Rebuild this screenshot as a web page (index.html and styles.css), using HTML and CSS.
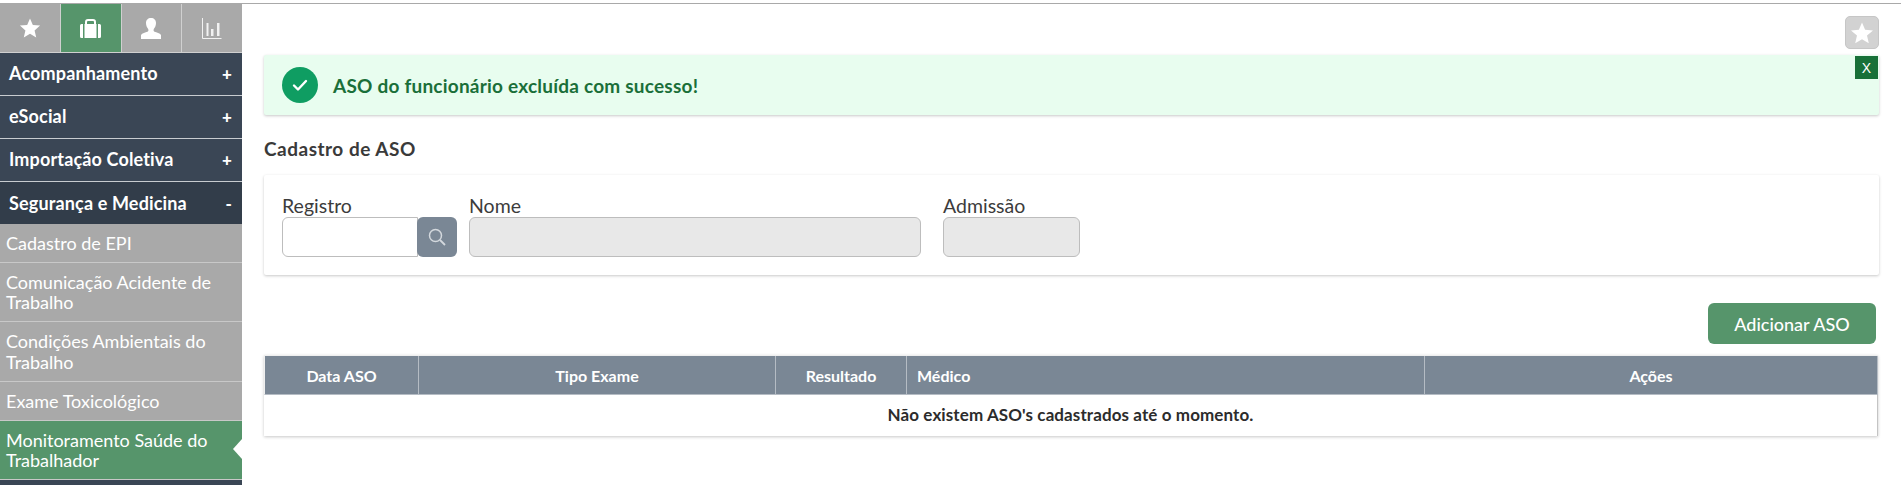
FILE: index.html
```html
<!DOCTYPE html>
<html lang="pt-BR">
<head>
<meta charset="utf-8">
<title>Cadastro de ASO</title>
<link rel="stylesheet" href="styles.css">
</head>
<body>
<div class="page">
  <aside class="sidebar">
    <nav class="tabs">
      <div class="tab">
        <svg width="22" height="22" viewBox="0 0 24 24"><path fill="#fff" d="M12 1.500l3.100 7.200 7.900.7-6 5.200 1.800 7.700L12 18.200l-6.800 4.100 1.800-7.700-6-5.200 7.900-.7z"/></svg>
      </div>
      <div class="tab tab-active">
        <svg width="21" height="19" viewBox="0 0 21 19"><path fill="#fff" d="M0 6.500Q0 5 1.500 5H3v14H1.500Q0 19 0 17.500zM4.500 5h12v14h-12zM18 5h1.500Q21 5 21 6.500v11q0 1.500-1.500 1.500H18z"/><path fill="none" stroke="#fff" stroke-width="2" d="M6 5V3q0-2 2-2h5q2 0 2 2v2"/></svg>
      </div>
      <div class="tab">
        <svg width="20" height="21" viewBox="0 0 20 21"><path fill="#fff" d="M10 0c3 0 5 2 5 5 0 2.500-1 4.700-2.200 6-.5 1.300-.2 2.300.7 2.800 2 .9 5.500 1.200 6.500 3.200V21H0v-4c1-2 4.500-2.300 6.500-3.200.9-.5 1.200-1.500.7-2.800C6 9.700 5 7.500 5 5c0-3 2-5 5-5z"/></svg>
      </div>
      <div class="tab">
        <svg width="20" height="21" viewBox="0 0 20 21"><path fill="none" stroke="#f2f2f2" stroke-width="1" d="M.5 0v20.500H19.500"/><path fill="#f2f2f2" d="M4.500 5h2v13h-2zM9 11h2.500v7H9zM15 5h2.500v13H15z"/></svg>
      </div>
    </nav>
    <ul class="menu">
      <li class="group"><span>Acompanhamento</span><b>+</b></li>
      <li class="group"><span>eSocial</span><b>+</b></li>
      <li class="group"><span>Importação Coletiva</span><b>+</b></li>
      <li class="group group-open"><span>Segurança e Medicina</span><b>-</b></li>
      <li class="item">Cadastro de EPI</li>
      <li class="item">Comunicação Acidente de Trabalho</li>
      <li class="item">Condições Ambientais do Trabalho</li>
      <li class="item">Exame Toxicológico</li>
      <li class="item item-active">Monitoramento Saúde do Trabalhador</li>
      <li class="group group-rest"></li>
    </ul>
  </aside>
  <main class="content">
    <div class="fav-row">
      <button class="fav" type="button" aria-label="Favoritar">
        <svg width="24" height="24" viewBox="0 0 24 24"><path fill="#fff" d="M12 1.500l3.100 7.200 7.900.7-6 5.200 1.800 7.700L12 18.200l-6.800 4.100 1.800-7.700-6-5.200 7.900-.7z"/></svg>
      </button>
    </div>
    <section class="alert">
      <span class="check">
        <svg width="20" height="20" viewBox="0 0 20 20"><path fill="none" stroke="#fff" stroke-width="2.400" stroke-linecap="round" stroke-linejoin="round" d="M4 10.500l4 4 8-8.500"/></svg>
      </span>
      <strong class="alert-text">ASO do funcionário excluída com sucesso!</strong>
      <button class="alert-close" type="button">X</button>
    </section>
    <h1 class="title">Cadastro de ASO</h1>
    <section class="card">
      <div class="field field-reg">
        <label>Registro</label>
        <div class="input-group">
          <input class="input" type="text">
          <button class="search" type="button" aria-label="Buscar">
            <svg width="20" height="20" viewBox="0 0 20 20"><circle cx="8.500" cy="8.500" r="6" fill="none" stroke="#d3d8dd" stroke-width="1.500"/><path stroke="#d3d8dd" stroke-width="1.800" d="M13 13l5 5"/></svg>
          </button>
        </div>
      </div>
      <div class="field field-name">
        <label>Nome</label>
        <input class="input input-off" type="text" disabled>
      </div>
      <div class="field field-adm">
        <label>Admissão</label>
        <input class="input input-off" type="text" disabled>
      </div>
    </section>
    <div class="actions"><button class="add" type="button">Adicionar ASO</button></div>
    <table class="grid">
      <colgroup>
        <col class="c1"><col class="c2"><col class="c3"><col class="c4"><col>
      </colgroup>
      <thead>
        <tr><th>Data ASO</th><th>Tipo Exame</th><th>Resultado</th><th class="left">Médico</th><th>Ações</th></tr>
      </thead>
      <tbody>
        <tr><td colspan="5">Não existem ASO's cadastrados até o momento.</td></tr>
      </tbody>
    </table>
  </main>
</div>
</body>
</html>
```
FILE: styles.css
```css
* { box-sizing: border-box; }
html, body { margin: 0; height: 100%; overflow: hidden; }
body {
  background: #fff;
  font-family: "Lato", "Noto Sans", sans-serif;
  color: #333;
}
.page {
  display: flex;
  height: 485px;
  border-top: 1px solid #a9a9a9;
  margin-top: 3px;
  background: #fff;
}
.sidebar { width: 242px; flex: none; overflow: hidden; }
.tabs { display: flex; height: 49px; background: #a9a9a9; border-bottom: 1px solid #d0d0d0; }
.tab {
  flex: 1;
  display: flex;
  align-items: center;
  justify-content: center;
  border-left: 1px solid #d0d0d0;
}
.tab:first-child { border-left: 0; }
.tab-active { background: #56956b; }
.menu { list-style: none; margin: 0; padding: 0; }
.group {
  display: flex;
  justify-content: space-between;
  align-items: center;
  height: 43px;
  padding: 0 10px 2px 9px;
  background: #3a4655;
  border-bottom: 1px solid #c8ccd0;
  color: #fff;
  font-size: 18px;
  letter-spacing: .15px;
  font-weight: 700;
}
.group b { font-size: 17px; }
.group-open { background: #323d4a; border-bottom: 0; height: 42px; padding-bottom: 0; }
.group-rest { height: 10px; border: 0; }
.item {
  position: relative;
  padding: 8.800px 6px;
  background: #a9a9a9;
  border-bottom: 1px solid #c8c8c8;
  color: #fff;
  font-size: 18px;
  line-height: 20.400px;
}
.item-active { background: #56956b; }
.item-active::after {
  content: "";
  position: absolute;
  right: 0;
  top: 18px;
  border-style: solid;
  border-color: transparent #fff transparent transparent;
  border-width: 10px 9px 10px 0;
}
.content { flex: 1; min-width: 0; padding: 12px 22px 0 22px; }
.fav-row { display: flex; justify-content: flex-end; height: 39px; }
.fav {
  width: 34px;
  height: 33px;
  padding: 0;
  background: #d2d2d2;
  border: 1px solid #c6c6c6;
  border-radius: 5px;
  display: flex;
  align-items: center;
  justify-content: center;
}
.alert {
  position: relative;
  display: flex;
  align-items: center;
  height: 60px;
  padding-left: 18px;
  background: #e8fdef;
  border-radius: 2px;
  box-shadow: 0 1px 3px rgba(0,0,0,.22);
}
.check {
  width: 36px;
  height: 36px;
  flex: none;
  border-radius: 50%;
  background: #0f9d62;
  display: flex;
  align-items: center;
  justify-content: center;
}
.alert-text { margin-left: 15px; font-size: 19px; letter-spacing: .22px; font-weight: 700; color: #1a6f39; }
.alert-close {
  position: absolute;
  right: 1px;
  top: 1px;
  width: 23px;
  height: 23px;
  padding: 0;
  border: 0;
  background: #187038;
  color: #fff;
  font: 14px "Liberation Sans", sans-serif;
}
.title { margin: 24px 0 0; height: 36px; font-size: 19px; letter-spacing: .5px; line-height: 20px; font-weight: 700; color: #3a3a3a; }
.card {
  display: flex;
  height: 100px;
  padding: 21px 18px 0;
  border-radius: 2px;
  background: #fff;
  box-shadow: 0 1px 3px rgba(0,0,0,.22);
}
.field label { display: block; height: 21px; font-size: 19.500px; line-height: 20px; color: #3c3c3c; }
.field-reg { width: 175px; }
.field-name { width: 452px; margin-left: 12px; }
.field-adm { width: 137px; margin-left: 22px; }
.input-group { display: flex; }
.input {
  display: block;
  width: 100%;
  height: 40px;
  border: 1px solid #bdbdbd;
  border-radius: 6px;
  background: #fff;
}
.input-group .input { width: 136px; border-radius: 6px 0 0 6px; }
.input-off { background: #e8e8e8; }
.search {
  width: 40px;
  height: 40px;
  margin-left: -1px;
  padding: 0;
  border: 0;
  border-radius: 6px;
  background: #7a8795;
  display: flex;
  align-items: center;
  justify-content: center;
}
.actions { display: flex; justify-content: flex-end; margin-top: 28px; padding-right: 3px; }
.add {
  width: 168px;
  height: 41px;
  padding: 0;
  border: 0;
  border-radius: 6px;
  background: #56956b;
  color: #fff;
  font: 500 18px "Lato", sans-serif;
}
.grid {
  width: calc(100% - 1px);
  margin-top: 11px;
  table-layout: fixed;
  border-collapse: separate;
  border-spacing: 0;
  background: #fff;
  border-top: 1px solid #efefef;
  box-shadow: 0 1px 3px rgba(0,0,0,.22);
}
.c1 { width: 154px; }
.c2 { width: 357px; }
.c3 { width: 131px; }
.c4 { width: 518px; }
.grid th {
  height: 39px;
  padding: 0;
  background: #7a8795;
  border-left: 1px solid #b5bcc4;
  border-bottom: 1px solid #b5bcc4;
  color: #fff;
  font-size: 16px;
  font-weight: 700;
}
.grid th:first-child { border-left: 1px solid #efefef; }
.grid th:last-child { border-right: 1px solid #b5bcc4; }
.grid th.left { text-align: left; padding-left: 10px; }
.grid td {
  height: 41px;
  padding: 0 0 2px;
  border-right: 1px solid #c4c4c4;
  text-align: center;
  font-size: 17px;
  letter-spacing: .1px;
  font-weight: 700;
  color: #2c2c2c;
}
```
